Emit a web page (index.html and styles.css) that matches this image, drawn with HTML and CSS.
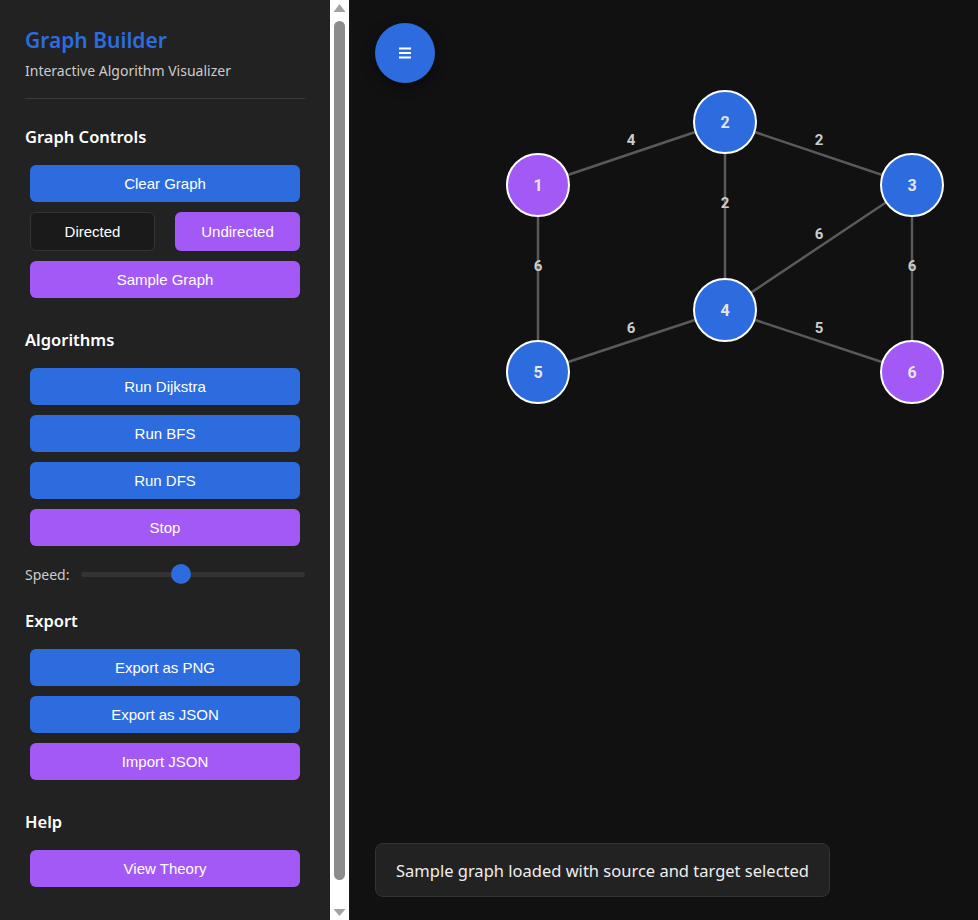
FILE: index.html
```html
<!DOCTYPE html>
<html lang="en">
<head>
<meta charset="utf-8">
<title>Graph Builder</title>
<link rel="stylesheet" href="styles.css">
</head>
<body>
<div class="app">
  <aside class="sidebar">
    <div class="sidebar-content">
      <div class="brand">
        <h1 class="title">Graph Builder</h1>
        <p class="subtitle">Interactive Algorithm Visualizer</p>
      </div>

      <section class="group">
        <h2 class="group-title">Graph Controls</h2>
        <button class="btn btn-blue">Clear Graph</button>
        <div class="toggle-row">
          <button class="btn btn-dark">Directed</button>
          <button class="btn btn-purple">Undirected</button>
        </div>
        <button class="btn btn-purple">Sample Graph</button>
      </section>

      <section class="group">
        <h2 class="group-title">Algorithms</h2>
        <button class="btn btn-blue">Run Dijkstra</button>
        <button class="btn btn-blue">Run BFS</button>
        <button class="btn btn-blue">Run DFS</button>
        <button class="btn btn-purple">Stop</button>
        <div class="speed-row">
          <span class="speed-label">Speed:</span>
          <div class="slider">
            <div class="slider-track"></div>
            <div class="slider-thumb"></div>
          </div>
        </div>
      </section>

      <section class="group">
        <h2 class="group-title">Export</h2>
        <button class="btn btn-blue">Export as PNG</button>
        <button class="btn btn-blue">Export as JSON</button>
        <button class="btn btn-purple">Import JSON</button>
      </section>

      <section class="group">
        <h2 class="group-title">Help</h2>
        <button class="btn btn-purple">View Theory</button>
      </section>
    </div>

    <div class="scrollbar" aria-hidden="true">
      <svg class="sb-arrow" width="19" height="17" viewBox="0 0 19 17" xmlns="http://www.w3.org/2000/svg">
        <polygon points="9.5,4 15.5,12 3.5,12" fill="#a3a3a3"/>
      </svg>
      <div class="sb-thumb"></div>
      <svg class="sb-arrow" width="19" height="17" viewBox="0 0 19 17" xmlns="http://www.w3.org/2000/svg">
        <polygon points="3.5,6 15.5,6 9.5,13" fill="#a3a3a3"/>
      </svg>
    </div>
  </aside>

  <main class="canvas-area">
    <svg class="graph" width="628" height="920" viewBox="0 0 628 920" xmlns="http://www.w3.org/2000/svg">
      <g class="edges" stroke="#5a5a5a" stroke-width="2.5">
        <line x1="188" y1="185" x2="375" y2="122"/>
        <line x1="375" y1="122" x2="562" y2="185"/>
        <line x1="375" y1="122" x2="375" y2="310"/>
        <line x1="188" y1="185" x2="188" y2="372"/>
        <line x1="562" y1="185" x2="375" y2="310"/>
        <line x1="562" y1="185" x2="562" y2="372"/>
        <line x1="375" y1="310" x2="188" y2="372"/>
        <line x1="375" y1="310" x2="562" y2="372"/>
      </g>
      <g class="weights">
        <text x="281" y="140">4</text>
        <text x="469" y="140">2</text>
        <text x="375" y="203">2</text>
        <text x="188" y="266">6</text>
        <text x="469" y="234">6</text>
        <text x="562" y="266">6</text>
        <text x="281" y="328">6</text>
        <text x="469" y="328">5</text>
      </g>
      <g class="nodes" stroke="#ffffff" stroke-width="2">
        <circle cx="188" cy="185" r="31" fill="#a259f5"/>
        <circle cx="375" cy="122" r="31" fill="#2d6cdf"/>
        <circle cx="562" cy="185" r="31" fill="#2d6cdf"/>
        <circle cx="375" cy="310" r="31" fill="#2d6cdf"/>
        <circle cx="188" cy="372" r="31" fill="#2d6cdf"/>
        <circle cx="562" cy="372" r="31" fill="#a259f5"/>
      </g>
      <g class="labels">
        <text x="188" y="185">1</text>
        <text x="375" y="122">2</text>
        <text x="562" y="185">3</text>
        <text x="375" y="310">4</text>
        <text x="188" y="372">5</text>
        <text x="562" y="372">6</text>
      </g>
    </svg>

    <button class="menu-btn" aria-label="Menu">
      <svg width="14" height="12" viewBox="0 0 14 12" xmlns="http://www.w3.org/2000/svg">
        <rect x="1" y="0.5" width="12" height="2" fill="#fff"/>
        <rect x="1" y="5" width="12" height="2" fill="#fff"/>
        <rect x="1" y="9.5" width="12" height="2" fill="#fff"/>
      </svg>
    </button>

    <div class="toast">Sample graph loaded with source and target selected</div>
  </main>
</div>
</body>
</html>
```
FILE: styles.css
```css
* { box-sizing: border-box; }

html, body {
  margin: 0;
  padding: 0;
  height: 100%;
  background: #111111;
  font-family: "Noto Sans", "Open Sans", sans-serif;
  overflow: hidden;
}

.app {
  display: flex;
  height: 920px;
}

/* ---------- sidebar ---------- */
.sidebar {
  flex: 0 0 auto;
  display: flex;
  height: 920px;
  background: #222222;
  border-right: 1px solid #1a1a1a;
}

.sidebar-content {
  width: 330px;
  height: 920px;
  overflow: hidden;
  padding: 25px;
}

.scrollbar {
  width: 19px;
  height: 920px;
  background: #ffffff;
  display: flex;
  flex-direction: column;
  align-items: center;
}

.sb-arrow {
  flex: 0 0 auto;
  display: block;
}

.sb-thumb {
  flex: 1;
  width: 11px;
  margin: 4px 0 23px;
  border-radius: 6px;
  background: #8c8c8c;
}

.brand {
  border-bottom: 1px solid #3a3a3a;
  padding-bottom: 17px;
  margin-bottom: 26px;
}

.title {
  margin: 0;
  font-size: 21px;
  font-weight: 600;
  color: #2d6cdf;
  line-height: 30px;
}

.subtitle {
  margin: 6px 0 0 0;
  font-size: 14px;
  color: #cccccc;
  line-height: 20px;
}

.group {
  display: flex;
  flex-direction: column;
  gap: 10px;
  margin-bottom: 30.5px;
}

.group-title {
  margin: 0 0 6px 0;
  font-size: 16.5px;
  font-weight: 600;
  color: #ffffff;
  line-height: 24px;
}

.btn {
  display: block;
  margin: 0 5px;
  height: 37px;
  border: none;
  border-radius: 6px;
  font-family: "Liberation Sans", Arial, sans-serif;
  font-size: 15px;
  color: #ffffff;
  padding: 0;
  cursor: pointer;
}

.btn-blue { background: #2d6cdf; }
.btn-purple { background: #a259f5; }
.btn-dark {
  background: #1a1a1a;
  border: 1px solid #333333;
}

.toggle-row {
  display: grid;
  grid-template-columns: 1fr 1fr;
  column-gap: 10px;
}

.toggle-row .btn {
  height: 38.5px;
}

.speed-row {
  display: flex;
  align-items: center;
  gap: 12px;
  margin: 8px 0 -6px;
  height: 20px;
}

.speed-label {
  font-size: 14px;
  color: #cccccc;
}

.slider {
  position: relative;
  flex: 1;
  height: 20px;
  display: flex;
  align-items: center;
}

.slider-track {
  width: 100%;
  height: 5px;
  border-radius: 3px;
  background: #333333;
}

.slider-thumb {
  position: absolute;
  left: 90px;
  top: 0;
  width: 20px;
  height: 20px;
  border-radius: 50%;
  background: #2d6cdf;
}

/* ---------- canvas ---------- */
.canvas-area {
  position: relative;
  flex: 1;
  height: 920px;
  background: #111111;
}

.graph {
  position: absolute;
  left: 0;
  top: 0;
}

.weights text {
  font-family: Roboto, "Liberation Sans", sans-serif;
  font-size: 15px;
  font-weight: 700;
  fill: #cccccc;
  text-anchor: middle;
  dominant-baseline: central;
}

.labels text {
  font-family: Roboto, "Liberation Sans", sans-serif;
  font-size: 16px;
  font-weight: 700;
  fill: #e6e6e6;
  text-anchor: middle;
  dominant-baseline: central;
}

.menu-btn {
  position: absolute;
  left: 25px;
  top: 23px;
  width: 60px;
  height: 60px;
  border-radius: 50%;
  border: none;
  background: #2d6cdf;
  box-shadow: 0 4px 12px rgba(0, 0, 0, 0.5);
  display: flex;
  align-items: center;
  justify-content: center;
  padding: 0;
}

.toast {
  position: absolute;
  left: 25px;
  bottom: 23px;
  height: 54px;
  padding: 0 20px;
  display: flex;
  align-items: center;
  background: #222222;
  border: 1px solid #333333;
  border-radius: 8px;
  color: #eeeeee;
  font-size: 16.5px;
}
```
